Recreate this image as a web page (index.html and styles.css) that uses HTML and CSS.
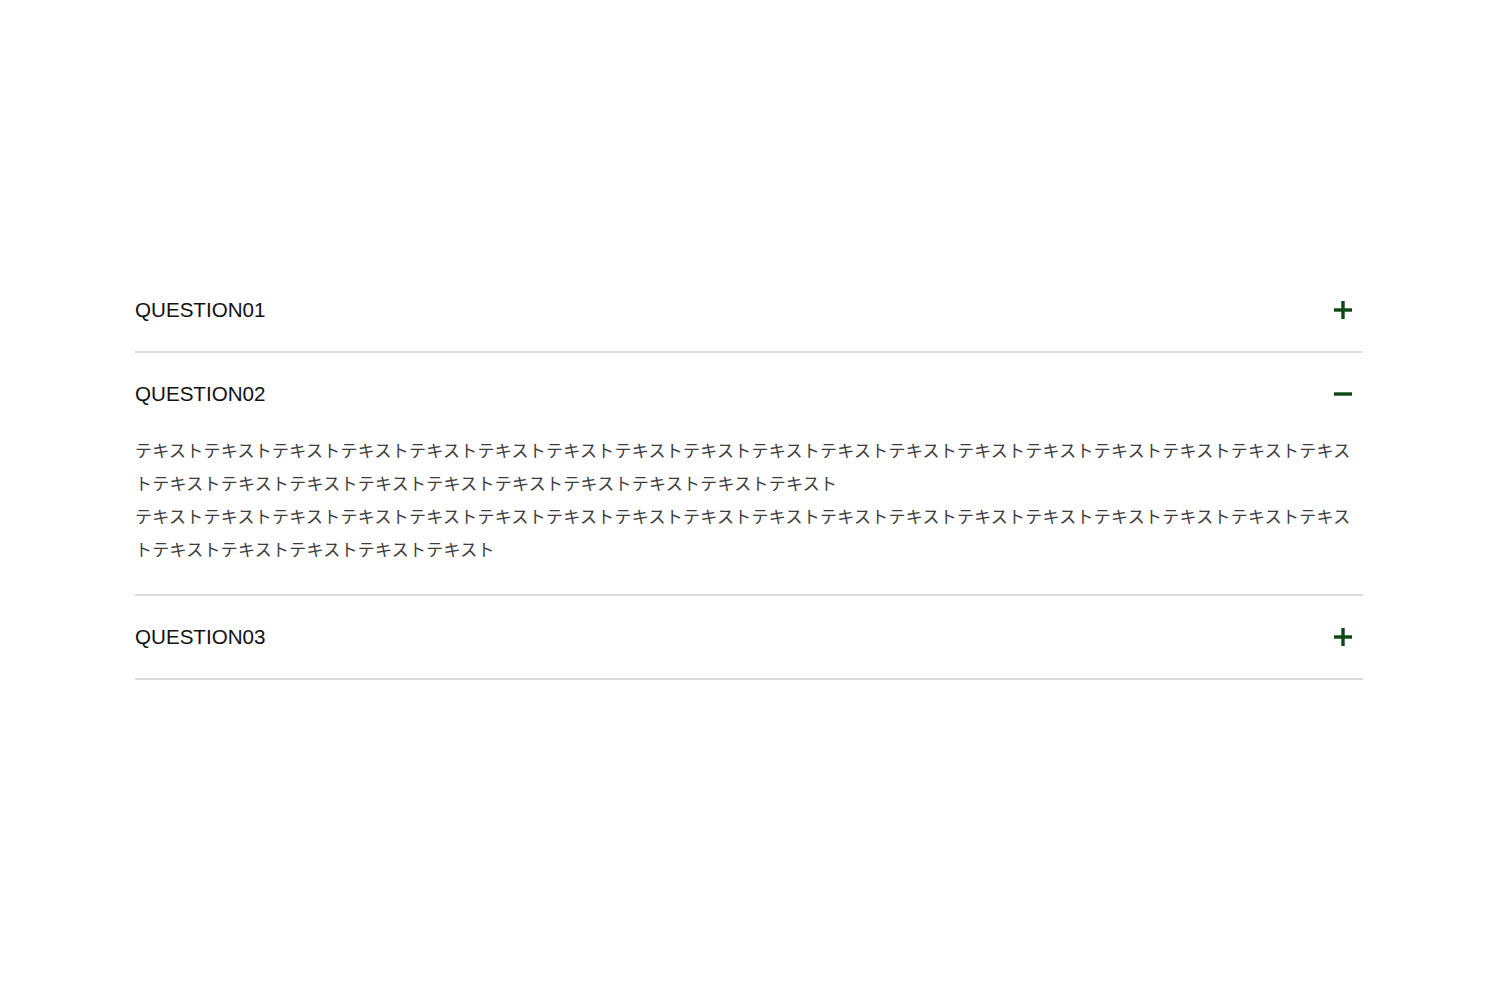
FILE: index.html
```html
<!DOCTYPE html>
<html lang="ja">
<head>
<meta charset="utf-8">
<title>FAQ</title>
<link rel="stylesheet" href="styles.css">
</head>
<body>
<div class="faq">
  <div class="item">
    <div class="head">
      <span class="q">QUESTION01</span>
      <svg class="icon" viewBox="0 0 18 18" width="18" height="18"><rect x="0" y="7.3" width="18" height="3.4"/><rect x="7.3" y="0" width="3.4" height="18"/></svg>
    </div>
  </div>
  <div class="item open">
    <div class="head">
      <span class="q">QUESTION02</span>
      <svg class="icon" viewBox="0 0 18 18" width="18" height="18"><rect x="0" y="7.3" width="18" height="3.4"/></svg>
    </div>
    <div class="body">
      <p>テキストテキストテキストテキストテキストテキストテキストテキストテキストテキストテキストテキストテキストテキストテキストテキストテキストテキストテキストテキストテキストテキストテキストテキストテキストテキストテキストテキスト</p>
      <p>テキストテキストテキストテキストテキストテキストテキストテキストテキストテキストテキストテキストテキストテキストテキストテキストテキストテキストテキストテキストテキストテキストテキスト</p>
    </div>
  </div>
  <div class="item">
    <div class="head">
      <span class="q">QUESTION03</span>
      <svg class="icon" viewBox="0 0 18 18" width="18" height="18"><rect x="0" y="7.3" width="18" height="3.4"/><rect x="7.3" y="0" width="3.4" height="18"/></svg>
    </div>
  </div>
</div>
</body>
</html>
```

FILE: styles.css
```css
html, body {
  margin: 0;
  padding: 0;
  background: #ffffff;
}

body {
  font-family: "Liberation Sans", "Noto Sans CJK JP", sans-serif;
  color: #111111;
}

.faq {
  width: 1228px;
  margin: 0 0 0 135px;
  padding-top: 269px;
}

.item {
  border-bottom: 2px solid #dcdcdc;
}

.head {
  display: flex;
  align-items: center;
  justify-content: space-between;
  padding: 29px 11px 29px 0;
  height: 24px;
}

.q {
  font-size: 20.6px;
  line-height: 24px;
  color: #111111;
}

.icon {
  display: block;
  fill: #0b4a12;
}

.body {
  margin-top: -2px;
  padding-bottom: 29px;
}

.body p {
  margin: 0;
  font-family: "Noto Sans CJK JP", sans-serif;
  font-size: 17px;
  letter-spacing: 0.25px;
  line-height: 33px;
  color: #3c3c3c;
}
```
